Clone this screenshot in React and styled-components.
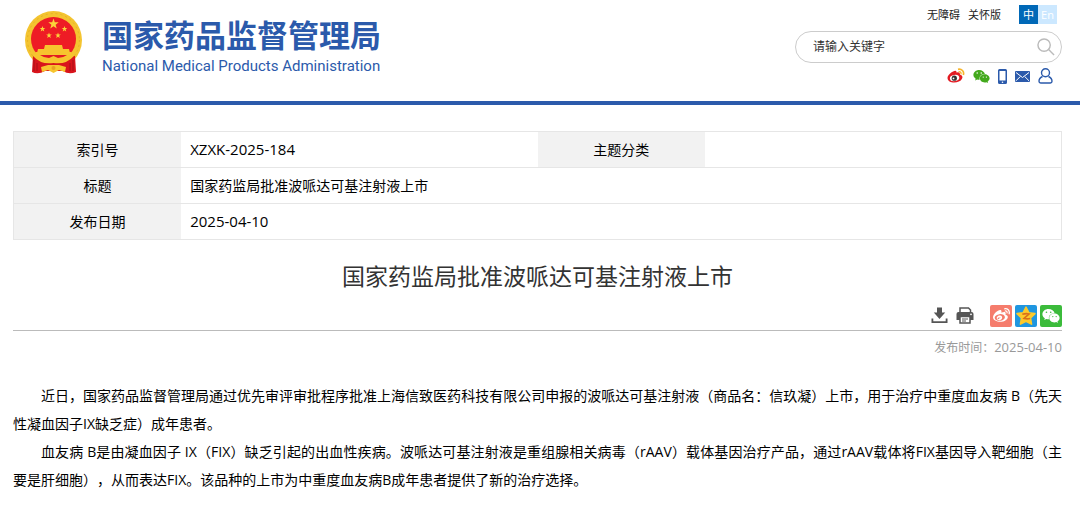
import React from 'react';
import styled, { createGlobalStyle } from 'styled-components';
import { FaWeibo, FaWeixin } from 'react-icons/fa';

const GlobalStyle = createGlobalStyle`
  * {
    box-sizing: border-box;
  }

  body {
    margin: 0;
    background: #fff;
    color: #000;
    font-family: 'Open Sans', 'Noto Sans CJK SC', sans-serif;
    font-size: 14px;
  }
`;

const Header = styled.header`
  display: flex;
  justify-content: space-between;
  height: 105px;
  padding: 5px 18px 0 24px;
  border-bottom: 4px solid #2b5aab;
`;

const Brand = styled.a`
  display: flex;
  align-items: flex-start;
  gap: 18px;
  padding-top: 5px;
  color: #2b5aab;
  text-decoration: none;
`;

const BrandText = styled.div`
  display: flex;
  flex-direction: column;
  padding-top: 4px;
`;

const BrandName = styled.span`
  font-family: 'Noto Sans CJK SC', sans-serif;
  font-size: 31px;
  font-weight: 700;
  line-height: 40px;
`;

const BrandSub = styled.span`
  font-family: Roboto, sans-serif;
  font-size: 15px;
  line-height: 24px;
`;

const HeaderSide = styled.div`
  display: flex;
  flex-direction: column;
  align-items: flex-end;
  width: 267px;
`;

const TopLinks = styled.nav`
  display: flex;
  align-items: center;
  padding-right: 5px;
`;

const TopLink = styled.a`
  margin-right: 8px;
  color: #222;
  font-size: 11px;
  line-height: 18px;
  text-decoration: none;
`;

const Languages = styled.div`
  display: flex;
  margin-left: 10px;
`;

const LanguageButton = styled.button`
  width: 19px;
  height: 19px;
  padding: 0;
  border: 0;
  background: ${props => (props.$active ? '#0068b7' : '#cce8ff')};
  color: #fff;
  font-family: inherit;
  font-size: 11px;
  line-height: 18px;
`;

const SearchBox = styled.form`
  display: flex;
  align-items: center;
  width: 100%;
  height: 32px;
  margin-top: 7px;
  padding: 0 6px 0 17px;
  border: 1px solid #ccc;
  border-radius: 16px;
`;

const SearchInput = styled.input`
  flex: 1;
  min-width: 0;
  padding: 0 0 2px;
  border: 0;
  outline: 0;
  background: transparent;
  font-family: inherit;
  font-size: 12px;

  &::placeholder {
    color: #333;
    opacity: 1;
  }
`;

const IconButton = styled.button`
  display: flex;
  padding: 0;
  border: 0;
  background: transparent;
`;

const QuickLinks = styled.nav`
  display: flex;
  align-items: center;
  gap: 8px;
  height: 18px;
  margin-top: 4px;
  padding-right: 9px;
`;

const IconLink = styled.a`
  display: flex;
  color: ${props => props.$color || '#2b5aab'};
`;

const Main = styled.main`
  padding: 26px 18px 16px 13px;
`;

const InfoTable = styled.table`
  width: 100%;
  border: 1px solid #e6e6e6;
  border-collapse: collapse;
  table-layout: fixed;
`;

const InfoRow = styled.tr`
  height: 36px;
  border-bottom: 1px solid #e6e6e6;
`;

const InfoLabel = styled.th`
  width: 16%;
  padding: 0 0 2px;
  background: #f2f2f2;
  font-weight: 400;
  text-align: center;
`;

const InfoValue = styled.td`
  padding: 0 9px 2px;
  font-size: ${props => (props.$numeric ? '15px' : '14px')};
`;

const Title = styled.h1`
  margin: 17px 0 9px;
  color: #333;
  font-size: 23px;
  font-weight: 400;
  line-height: 38px;
  text-align: center;
`;

const Toolbar = styled.div`
  display: flex;
  justify-content: flex-end;
  align-items: center;
  height: 27px;
  padding-bottom: 3px;
  border-bottom: 1px solid #bbb;
`;

const Tools = styled.div`
  display: flex;
  gap: 8px;
  margin-right: 16px;
`;

const Shares = styled.div`
  display: flex;
  gap: 3px;
`;

const ShareButton = styled.button`
  display: flex;
  align-items: center;
  justify-content: center;
  width: 22px;
  height: 22px;
  padding: 0;
  border: 0;
  border-radius: 2px;
  background: ${props => props.$color};
  color: #fff;
`;

const PublishTime = styled.p`
  margin: 6px 0 0;
  color: #999;
  font-size: 12px;
  line-height: 20px;
  text-align: right;
`;

const PublishDate = styled.time`
  font-size: 13px;
`;

const Article = styled.article`
  margin-top: 24px;
`;

const Paragraph = styled.p`
  margin: 0;
  font-size: 14px;
  line-height: 28px;
  text-align: justify;
  text-indent: 28px;
  text-spacing-trim: space-all;
`;

const starPoints = (cx, cy, r, inner = 0.4) =>
  Array.from({ length: 10 }, (_, i) => {
    const radius = i % 2 ? r * inner : r;
    const angle = (Math.PI / 5) * i - Math.PI / 2;
    return `${cx + radius * Math.cos(angle)},${cy + radius * Math.sin(angle)}`;
  }).join(' ');

const Emblem = () => (
  <svg width="60" height="65" viewBox="0 0 60 65" aria-hidden="true">
    <ellipse cx="29.500" cy="30" rx="28.500" ry="29" fill="#f4c430" />
    <ellipse cx="29.500" cy="30" rx="26" ry="26.500" fill="none" stroke="#e6b225" strokeWidth="1" strokeDasharray="2 3" />
    <path d="M9 46 L51 46 L52 62 Q45 65 39 61 L21 61 Q14 65 8 62 Z" fill="#d9141c" />
    <ellipse cx="29.500" cy="29" rx="22.500" ry="22" fill="#ee1c25" />
    <polygon points={starPoints(29.5, 14, 5.5)} fill="#fbd43a" />
    <polygon points={starPoints(18.5, 19, 3)} fill="#fbd43a" />
    <polygon points={starPoints(40.5, 19, 3)} fill="#fbd43a" />
    <polygon points={starPoints(25, 25.5, 3)} fill="#fbd43a" />
    <polygon points={starPoints(34, 25.5, 3)} fill="#fbd43a" />
    <path d="M21 35 H38 L39 39 H45 L46 43 H13 L14 39 H20 Z" fill="#f7c52e" />
    <path d="M12 42 H47 L50 46 Q42 55 29.500 53 Q17 55 9 46 Z" fill="#f7c52e" />
    <path d="M16 45 H43 Q39 48 34 48 L29.500 46 L25 48 Q20 48 16 45 Z" fill="#e31b23" />
    <path d="M17 57 L24 55 H35 L42 57 L41 62 L35 60 L29.500 63 L24 60 L18 62 Z" fill="#f7c52e" />
    <circle cx="29.500" cy="58" r="2" fill="#e8a020" />
    <path d="M10 50 V61 M13 53 V61 M46 53 V61 M49 50 V61" stroke="#a80f16" strokeWidth="1" />
  </svg>
);

const SearchIcon = () => (
  <svg width="18" height="18" viewBox="0 0 19 19" fill="none" stroke="#bbb" strokeWidth="1.5">
    <circle cx="7.500" cy="7.500" r="6.500" />
    <path d="M12 12 L18 18" />
  </svg>
);

const WeiboColor = () => (
  <svg width="18" height="16" viewBox="0 0 18 16">
    <path d="M7.200 3 Q9.800 2 9.500 4.500 Q13.300 3.500 13 6.400 Q16.500 7.500 15 10.800 C12.500 16 0.600 16 0.500 10 C0.600 7 4.500 3.700 7.200 3 Z" fill="#e31b23" />
    <ellipse cx="7.600" cy="10" rx="4.700" ry="3.100" fill="#fff" transform="rotate(-8 7.600 10)" />
    <circle cx="7.300" cy="10.200" r="2.600" fill="#333" />
    <circle cx="6.500" cy="10.400" r="0.900" fill="#fff" />
    <path d="M11 1.300 C14.600 0.500 17.500 3.500 16.300 7" fill="none" stroke="#f7b52c" strokeWidth="1.700" />
    <path d="M11.600 3.700 C13.300 3.400 14.500 4.700 14 6.300" fill="none" stroke="#f7b52c" strokeWidth="1.300" />
  </svg>
);

const PhoneIcon = () => (
  <svg width="9" height="15" viewBox="0 0 9 15">
    <path fillRule="evenodd" d="M1.500 0 H7.500 Q9 0 9 1.500 V13.500 Q9 15 7.500 15 H1.500 Q0 15 0 13.500 V1.500 Q0 0 1.500 0 Z M1.500 2 V11.500 H7.500 V2 Z" fill="currentColor" />
    <circle cx="4.500" cy="13.200" r="0.800" fill="#fff" />
  </svg>
);

const MailIcon = () => (
  <svg width="15" height="11" viewBox="0 0 15 11">
    <rect width="15" height="11" rx="1" fill="currentColor" />
    <path d="M1 1.500 L7.500 6.500 L14 1.500 M1 9.800 L5.300 5.500 M14 9.800 L9.700 5.500" fill="none" stroke="#fff" strokeWidth="1" />
  </svg>
);

const UserIcon = () => (
  <svg width="15" height="16" viewBox="0 0 15 16" fill="none" stroke="currentColor" strokeWidth="1.400">
    <circle cx="7.500" cy="4.800" r="4" />
    <path d="M4.500 8.500 C2.300 9.500 1 11.500 1 13.300 Q1 15 2.700 15 H12.300 Q14 15 14 13.300 C14 11.500 12.700 9.500 10.500 8.500" />
  </svg>
);

const DownloadIcon = () => (
  <svg width="17" height="17" viewBox="0 0 17 17" fill="#555">
    <path d="M6 0.500 H11 V5.500 H14.200 L8.500 12 L2.800 5.500 H6 Z" />
    <path d="M0.500 11.500 H2.300 V14.300 H14.700 V11.500 H16.500 V16 H0.500 Z" />
  </svg>
);

const PrintIcon = () => (
  <svg width="18" height="17" viewBox="0 0 18 17">
    <path d="M4 6 V1 H12.500 L14.500 3 V6" fill="#fff" stroke="#555" strokeWidth="1.500" />
    <path d="M2.500 5 H15.500 Q17.500 5 17.500 7 V13 H0.500 V7 Q0.500 5 2.500 5 Z" fill="#555" />
    <rect x="4" y="9.500" width="10" height="6.500" fill="#fff" stroke="#555" strokeWidth="1.500" />
    <path d="M6 12 H12 M6 14 H10" stroke="#555" />
    <circle cx="15" cy="7.300" r="0.900" fill="#fff" />
  </svg>
);

const QzoneIcon = () => (
  <svg width="22" height="22" viewBox="0 0 21 21">
    <polygon points={starPoints(10.5, 11, 9, 0.5)} fill="#fcc92b" stroke="#fcc92b" strokeWidth="1.500" strokeLinejoin="round" />
    <path d="M7 8.800 Q10.500 7.800 13.500 8.500 L8.600 12.800 Q11.500 13.600 14.500 12.900" fill="none" stroke="#d9701a" strokeWidth="1.500" />
  </svg>
);

const App = () => (
  <>
    <GlobalStyle />
    <Header>
      <Brand href="#">
        <Emblem />
        <BrandText>
          <BrandName>国家药品监督管理局</BrandName>
          <BrandSub>National Medical Products Administration</BrandSub>
        </BrandText>
      </Brand>
      <HeaderSide>
        <TopLinks>
          <TopLink href="#">无障碍</TopLink>
          <TopLink href="#">关怀版</TopLink>
          <Languages>
            <LanguageButton type="button" $active>中</LanguageButton>
            <LanguageButton type="button">En</LanguageButton>
          </Languages>
        </TopLinks>
        <SearchBox role="search">
          <SearchInput type="text" placeholder="请输入关键字" aria-label="请输入关键字" />
          <IconButton type="submit" aria-label="搜索"><SearchIcon /></IconButton>
        </SearchBox>
        <QuickLinks>
          <IconLink href="#" aria-label="微博"><WeiboColor /></IconLink>
          <IconLink href="#" aria-label="微信" $color="#43a91c"><FaWeixin size={17} /></IconLink>
          <IconLink href="#" aria-label="手机"><PhoneIcon /></IconLink>
          <IconLink href="#" aria-label="邮箱"><MailIcon /></IconLink>
          <IconLink href="#" aria-label="用户"><UserIcon /></IconLink>
        </QuickLinks>
      </HeaderSide>
    </Header>
    <Main>
      <InfoTable>
        <tbody>
          <InfoRow>
            <InfoLabel scope="row">索引号</InfoLabel>
            <InfoValue $numeric>XZXK-2025-184</InfoValue>
            <InfoLabel scope="row">主题分类</InfoLabel>
            <InfoValue />
          </InfoRow>
          <InfoRow>
            <InfoLabel scope="row">标题</InfoLabel>
            <InfoValue colSpan={3}>国家药监局批准波哌达可基注射液上市</InfoValue>
          </InfoRow>
          <InfoRow>
            <InfoLabel scope="row">发布日期</InfoLabel>
            <InfoValue $numeric colSpan={3}>2025-04-10</InfoValue>
          </InfoRow>
        </tbody>
      </InfoTable>
      <Title>国家药监局批准波哌达可基注射液上市</Title>
      <Toolbar>
        <Tools>
          <IconButton type="button" aria-label="下载"><DownloadIcon /></IconButton>
          <IconButton type="button" aria-label="打印"><PrintIcon /></IconButton>
        </Tools>
        <Shares>
          <ShareButton type="button" aria-label="分享到微博" $color="#f57c6c"><FaWeibo size={17} /></ShareButton>
          <ShareButton type="button" aria-label="分享到QQ空间" $color="#1f96e0"><QzoneIcon /></ShareButton>
          <ShareButton type="button" aria-label="分享到微信" $color="#3bbb3b"><FaWeixin size={18} /></ShareButton>
        </Shares>
      </Toolbar>
      <PublishTime>
        发布时间：<PublishDate dateTime="2025-04-10">2025-04-10</PublishDate>
      </PublishTime>
      <Article>
        <Paragraph>
          近日，国家药品监督管理局通过优先审评审批程序批准上海信致医药科技有限公司申报的波哌达可基注射液（商品名：信玖凝）上市，用于治疗中重度血友病 B（先天性凝血因子IX缺乏症）成年患者。
        </Paragraph>
        <Paragraph>
          血友病 B是由凝血因子 IX（FIX）缺乏引起的出血性疾病。波哌达可基注射液是重组腺相关病毒（rAAV）载体基因治疗产品，通过rAAV载体将FIX基因导入靶细胞（主要是肝细胞），从而表达FIX。该品种的上市为中重度血友病B成年患者提供了新的治疗选择。
        </Paragraph>
      </Article>
    </Main>
  </>
);

export default App;
